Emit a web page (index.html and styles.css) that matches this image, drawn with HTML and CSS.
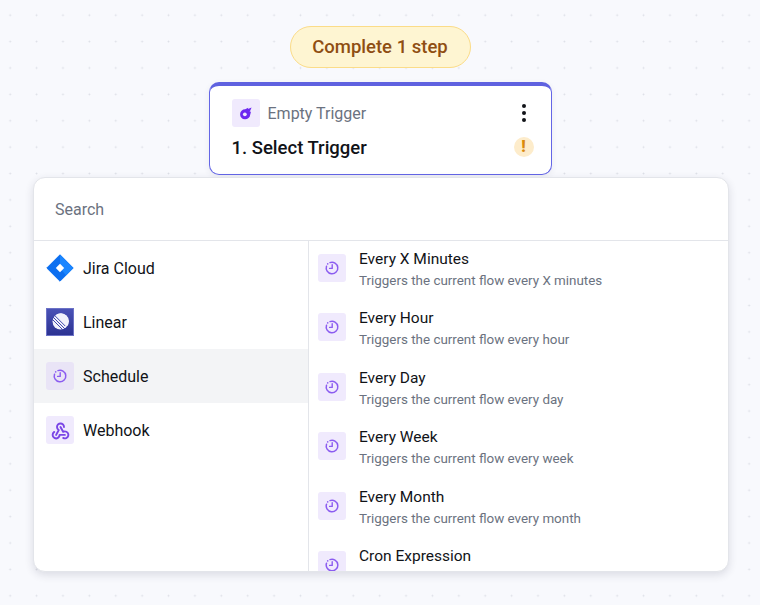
FILE: index.html

```html
<!DOCTYPE html>
<html lang="en">
<head>
  <meta charset="UTF-8" />
  <title>Select Trigger</title>
  <link rel="stylesheet" href="styles.css">
</head>
<body>
  <svg width="0" height="0" class="defs">
    <symbol id="clock" viewBox="0 0 16 16">
      <path d="M6 2.600A5.800 5.800 0 1 1 2.500 6.200" fill="none" stroke="currentColor" stroke-width="1.500" stroke-linecap="round"/>
      <path d="M8.200 4.800v3.600H5.600" fill="none" stroke="currentColor" stroke-width="1.400" stroke-linecap="round" stroke-linejoin="round"/>
      <circle cx="3.700" cy="3.900" r=".8" fill="currentColor"/>
    </symbol>
  </svg>

  <div class="canvas">
    <div class="pill">Complete 1 step</div>

    <div class="card">
      <div class="card-top">
        <span class="tile">
          <svg width="15" height="15" viewBox="0 0 16 16">
            <path d="M14.500 1.500 10.600 3.200 11 1.800 7.600 3.400A5.400 5.400 0 1 0 13 9.200l.9-3.400-1.500.6z" fill="#6d28f0"/>
            <circle cx="7.300" cy="8.800" r="2" fill="#f0eafd"/>
          </svg>
        </span>
        <span class="card-kind">Empty Trigger</span>
        <span class="dots"><i></i><i></i><i></i></span>
      </div>
      <div class="card-bottom">
        <span class="card-title">1. Select Trigger</span>
        <span class="warn">!</span>
      </div>
    </div>

    <div class="panel">
      <div class="search">Search</div>
      <div class="columns">
        <ul class="apps">
          <li class="app">
            <svg class="logo" width="28" height="28" viewBox="0 0 28 28">
              <path d="M14 .8 27.200 14 14 27.200.8 14z" fill="#0c6ff0" stroke="#0c6ff0" stroke-linejoin="round"/>
              <path d="M14 .8 27.200 14 20 21.200 14 14z" fill="#1a86ff"/>
              <path d="M14 9.800 18.200 14 14 18.200 9.800 14z" fill="#fff"/>
            </svg>
            Jira Cloud
          </li>
          <li class="app">
            <span class="linear">
              <svg width="20" height="20" viewBox="0 0 20 20">
                <circle cx="10.500" cy="9.500" r="8" fill="#f1f2fb"/>
                <path d="M2 7l11 11M2.600 4.600l12.800 12.800M4.200 3l11 11" stroke="#4049ad" stroke-width="1" fill="none"/>
                <path d="M6 2.900a8 8 0 0 1 11.400 11z" fill="#f1f2fb"/>
              </svg>
            </span>
            Linear
          </li>
          <li class="app active">
            <span class="tile dim"><svg class="clock" width="16" height="16"><use href="#clock"/></svg></span>
            Schedule
          </li>
          <li class="app">
            <span class="tile">
              <svg width="21" height="21" viewBox="0 0 24 24" fill="none" stroke="#7a45e6" stroke-width="2.200" stroke-linecap="round" stroke-linejoin="round">
                <path d="M4.876 13.610a4 4 0 1 0 6.124 3.390h6"/>
                <path d="M15.066 20.502a4 4 0 1 0 1.934-7.502c-.706 0-1.424.179-2 .5l-3-5.500"/>
                <path d="M16 8a4 4 0 1 0-8 0c0 1.506.77 2.818 2 3.500l-3 5.500"/>
              </svg>
            </span>
            Webhook
          </li>
        </ul>

        <ul class="actions">
          <li class="action">
            <span class="tile"><svg class="clock" width="16" height="16"><use href="#clock"/></svg></span>
            <div><div class="action-title">Every X Minutes</div><div class="action-desc">Triggers the current flow every X minutes</div></div>
          </li>
          <li class="action">
            <span class="tile"><svg class="clock" width="16" height="16"><use href="#clock"/></svg></span>
            <div><div class="action-title">Every Hour</div><div class="action-desc">Triggers the current flow every hour</div></div>
          </li>
          <li class="action">
            <span class="tile"><svg class="clock" width="16" height="16"><use href="#clock"/></svg></span>
            <div><div class="action-title">Every Day</div><div class="action-desc">Triggers the current flow every day</div></div>
          </li>
          <li class="action">
            <span class="tile"><svg class="clock" width="16" height="16"><use href="#clock"/></svg></span>
            <div><div class="action-title">Every Week</div><div class="action-desc">Triggers the current flow every week</div></div>
          </li>
          <li class="action">
            <span class="tile"><svg class="clock" width="16" height="16"><use href="#clock"/></svg></span>
            <div><div class="action-title">Every Month</div><div class="action-desc">Triggers the current flow every month</div></div>
          </li>
          <li class="action">
            <span class="tile"><svg class="clock" width="16" height="16"><use href="#clock"/></svg></span>
            <div><div class="action-title">Cron Expression</div></div>
          </li>
        </ul>
      </div>
    </div>
  </div>
</body>
</html>
```

FILE: styles.css

```css
html, body {
  margin: 0;
  height: 605px;
  overflow: hidden;
}
body {
  background-color: #f8f9fd;
  background-image: radial-gradient(circle, #dcdee6 0.8px, transparent 1.1px);
  background-size: 26.4px 26.4px;
  background-position: -3px 2px;
  font-family: "Roboto", "Lato", sans-serif;
  color: #111318;
}
ul {
  list-style: none;
  margin: 0;
  padding: 0;
}
.defs {
  position: absolute;
}
.canvas {
  display: flex;
  flex-direction: column;
  align-items: center;
  padding-top: 26px;
}
.pill {
  box-sizing: border-box;
  width: 181px;
  height: 42px;
  border: 1.5px solid #fbdc88;
  border-radius: 21px;
  background: #fef5d2;
  color: #8f4e12;
  font-size: 18.500px;
  font-weight: 500;
  line-height: 41px;
  text-align: center;
}
.card {
  box-sizing: border-box;
  width: 343px;
  height: 93px;
  margin-top: 14px;
  padding: 13px 17px 0 22px;
  background: #fff;
  border: 1.500px solid #6466e6;
  border-top: 4px solid #5f62e0;
  border-radius: 10px;
  box-shadow: 0 2px 6px rgba(60, 60, 90, 0.08);
}
.card-top {
  display: flex;
  align-items: center;
  gap: 8px;
}
.tile {
  display: flex;
  align-items: center;
  justify-content: center;
  flex: none;
  width: 28px;
  height: 28px;
  border-radius: 3px;
  background: #f0eafd;
}
.tile.dim {
  background: #e9e4f6;
}
.card-kind {
  flex: 1;
  font-size: 16px;
  color: #6b7280;
}
.dots {
  display: flex;
  flex-direction: column;
  gap: 3px;
  margin-right: 8px;
}
.dots i {
  width: 4px;
  height: 4px;
  border-radius: 50%;
  background: #111318;
}
.card-bottom {
  display: flex;
  align-items: center;
  justify-content: space-between;
  margin-top: 8px;
}
.card-title {
  font-size: 18.500px;
  font-weight: 500;
  line-height: 27px;
}
.warn {
  width: 20px;
  height: 20px;
  margin-bottom: 4px;
  border-radius: 50%;
  background: #fdeccb;
  color: #d98a0b;
  font-size: 16px;
  font-weight: 900;
  line-height: 20px;
  text-align: center;
}
.panel {
  box-sizing: border-box;
  width: 696px;
  height: 395px;
  margin: 2px 0 0 2px;
  background: #fff;
  border: 1px solid #e3e5ea;
  border-radius: 12px;
  box-shadow: 0 3px 8px rgba(40, 45, 70, 0.14);
  overflow: hidden;
}
.search {
  box-sizing: border-box;
  height: 63px;
  padding-left: 21px;
  border-bottom: 1px solid #e3e5ea;
  color: #6b7280;
  font-size: 16px;
  line-height: 63px;
}
.columns {
  display: flex;
}
.apps {
  box-sizing: border-box;
  flex: none;
  width: 275px;
  height: 331px;
  border-right: 1px solid #e3e5ea;
}
.app {
  display: flex;
  align-items: center;
  gap: 9px;
  height: 54px;
  padding-left: 12px;
  font-size: 16px;
}
.app.active {
  background: #f3f4f6;
}
.logo {
  flex: none;
}
.linear {
  display: flex;
  align-items: center;
  justify-content: center;
  flex: none;
  box-sizing: border-box;
  width: 28px;
  height: 28px;
  border: 1px solid #6c72c6;
  background: linear-gradient(#4a52b6, #2c3392);
}
.clock {
  color: #8b5cf0;
}
.actions {
  flex: 1;
  height: 331px;
  overflow: hidden;
}
.action {
  box-sizing: border-box;
  display: flex;
  align-items: flex-start;
  gap: 13px;
  height: 59.400px;
  padding: 7px 0 0 9px;
}
.action .tile {
  margin-top: 6px;
}
.action-title {
  font-size: 15.500px;
  line-height: 22px;
}
.action-desc {
  font-size: 13.400px;
  line-height: 22px;
  color: #6b7280;
}
```
